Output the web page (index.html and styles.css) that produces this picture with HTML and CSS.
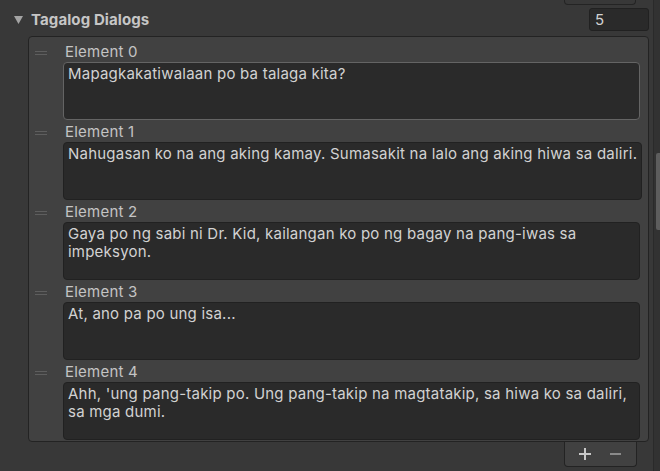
FILE: index.html
```html
<!DOCTYPE html>
<html>
<head>
<meta charset="utf-8">
<link rel="stylesheet" href="styles.css">
</head>
<body>
<div class="main">
  <div class="topbtn"></div>
  <div class="header">
    <svg class="fold" width="9" height="8" viewBox="0 0 9 8"><polygon points="0,0 9,0 4.5,8" fill="#a3a3a3"/></svg>
    <span class="title">Tagalog Dialogs</span>
    <div class="size">5</div>
  </div>
  <div class="list">
    <div class="item">
      <div class="handle"><div class="grip"></div></div>
      <div class="body">
        <div class="label">Element 0</div>
        <div class="field focus"><div class="line">Mapagkakatiwalaan po ba talaga kita?</div></div>
      </div>
    </div>
    <div class="item">
      <div class="handle"><div class="grip"></div></div>
      <div class="body">
        <div class="label">Element 1</div>
        <div class="field"><div class="line">Nahugasan ko na ang aking kamay. Sumasakit na lalo ang aking hiwa sa daliri.</div></div>
      </div>
    </div>
    <div class="item">
      <div class="handle"><div class="grip"></div></div>
      <div class="body">
        <div class="label">Element 2</div>
        <div class="field"><div class="line">Gaya po ng sabi ni Dr. Kid, kailangan ko po ng bagay na pang-iwas sa</div><div class="line">impeksyon.</div></div>
      </div>
    </div>
    <div class="item">
      <div class="handle"><div class="grip"></div></div>
      <div class="body">
        <div class="label">Element 3</div>
        <div class="field"><div class="line">At, ano pa po ung isa...</div></div>
      </div>
    </div>
    <div class="item">
      <div class="handle"><div class="grip"></div></div>
      <div class="body">
        <div class="label">Element 4</div>
        <div class="field"><div class="line">Ahh, 'ung pang-takip po. Ung pang-takip na magtatakip, sa hiwa ko sa daliri,</div><div class="line">sa mga dumi.</div></div>
      </div>
    </div>
  </div>
  <div class="footer">
    <svg class="plus" width="12" height="12" viewBox="0 0 12 12"><path d="M6 0V12M0 6H12" stroke="#c8c8c8" stroke-width="2"/></svg>
    <svg class="minus" width="11" height="2" viewBox="0 0 11 2"><path d="M0 1H11" stroke="#8a8a8a" stroke-width="2"/></svg>
  </div>
</div>
<div class="scroll"><div class="thumb"></div></div>
</body>
</html>
```
FILE: styles.css
```css
html, body {
  margin: 0;
  padding: 0;
}
body {
  width: 660px;
  height: 471px;
  overflow: hidden;
  background: #383838;
  display: flex;
  font-family: Inter, "Noto Sans", sans-serif;
  font-size: 15px;
  letter-spacing: 0.22px;
  color: #d2d2d2;
}
.main {
  width: 653px;
  flex: none;
  display: flex;
  flex-direction: column;
}
.topbtn {
  margin-left: 564px;
  width: 72px;
  height: 5px;
  box-sizing: border-box;
  border: 1px solid #242424;
  border-top: none;
  border-radius: 0 0 4px 4px;
}
.header {
  margin-top: 3px;
  height: 23px;
  display: flex;
  align-items: center;
}
.fold {
  margin-left: 14px;
  margin-top: 1px;
}
.title {
  margin-left: 8px;
  font-weight: 700;
  color: #c6c6c6;
  letter-spacing: 0.1px;
}
.size {
  margin-left: auto;
  margin-right: 4px;
  width: 60px;
  height: 23px;
  box-sizing: border-box;
  background: #2a2a2a;
  border: 1px solid #212121;
  border-radius: 3px;
  padding-left: 5px;
  line-height: 21px;
  color: #d2d2d2;
}
.list {
  margin-top: 5px;
  margin-left: 28px;
  width: 621px;
  box-sizing: border-box;
  background: #414141;
  border: 1px solid #232323;
  border-radius: 4px;
  padding: 3px 8px 1px 0;
}
.item {
  display: flex;
  height: 80px;
}
.handle {
  width: 34px;
  flex: none;
  padding-left: 6px;
  box-sizing: border-box;
}
.grip {
  margin-top: 11px;
  width: 12px;
  height: 4px;
  box-sizing: border-box;
  border-top: 1px solid #5e5e5e;
  border-bottom: 1px solid #5e5e5e;
}
.body {
  flex: 1;
  display: flex;
  flex-direction: column;
}
.label {
  height: 22px;
  line-height: 23px;
  padding-left: 2px;
  color: #c4c4c4;
}
.field {
  height: 58px;
  box-sizing: border-box;
  background: #2a2a2a;
  border: 1px solid #212121;
  border-radius: 4px;
  padding: 2px 4px;
  line-height: 18px;
  color: #d2d2d2;
}
.field.focus {
  border-color: #646464;
}
.line {
  white-space: nowrap;
}
.footer {
  margin-left: 564px;
  width: 73px;
  height: 25px;
  box-sizing: border-box;
  background: #414141;
  border: 1px solid #232323;
  border-top: none;
  border-radius: 0 0 4px 4px;
  display: flex;
  align-items: center;
}
.plus {
  margin-left: 14px;
}
.minus {
  margin-left: 19px;
}
.scroll {
  flex: none;
  width: 7px;
  box-sizing: border-box;
  background: #323232;
  border-left: 1px solid #2a2a2a;
  padding-top: 153px;
}
.thumb {
  margin-left: 2px;
  width: 4px;
  height: 77px;
  border-radius: 2px 0 0 2px;
  background: #5d5d5d;
}
```
